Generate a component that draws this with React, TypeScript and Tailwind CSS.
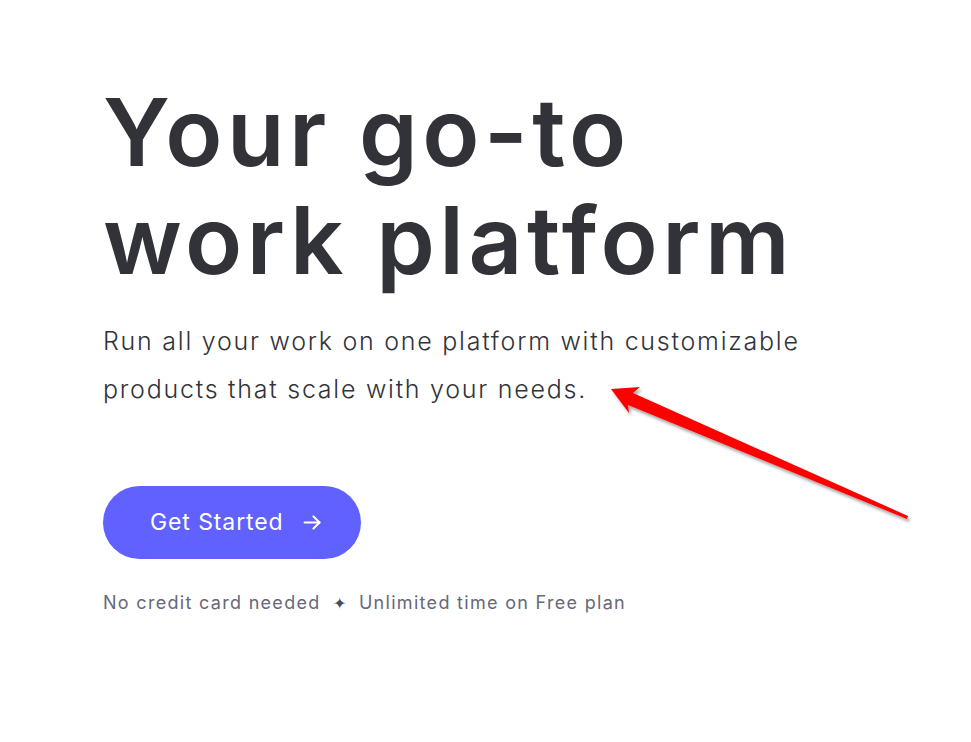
import React from "react";

export default function App() {
  return (
    <div className="relative w-[971px] h-[742px] bg-white overflow-hidden" style={{ fontFamily: "Inter, 'Noto Sans', sans-serif" }}>
      <div className="flex flex-col pl-[103px] pt-[78px]">
        <h1 className="text-[94px] leading-[108px] font-semibold text-[#323338] tracking-[4.5px]">
          Your go-to
          <br />
          work platform
        </h1>
        <p className="mt-[23px] text-[25px] leading-[48px] font-light text-[#323338] tracking-[1.75px]">
          Run all your work on one platform with customizable
          <br />
          products that scale with your needs.
        </p>
        <div className="mt-[73px] flex">
          <button className="flex items-center gap-[18px] h-[73px] w-[258px] rounded-full bg-[#6161ff] text-white text-[23px] tracking-[0.9px] pl-[47px]">
            <span>Get Started</span>
            <svg width="21" height="21" viewBox="0 0 24 24" fill="none" stroke="currentColor" strokeWidth="2.4" strokeLinecap="round" strokeLinejoin="round">
              <path d="M3 12h17" />
              <path d="M13 5l7 7-7 7" />
            </svg>
          </button>
        </div>
        <div className="mt-[30px] flex items-center text-[18px] text-[#676879] tracking-[1.3px]">
          <span>No credit card needed</span>
          <span className="mx-[12px] text-[16px] text-[#4b4c5e]">✦</span>
          <span>Unlimited time on Free plan</span>
        </div>
      </div>
      <svg className="absolute left-0 top-0 pointer-events-none" width="971" height="742" viewBox="0 0 971 742">
        <defs>
          <filter id="sh" x="-10%" y="-10%" width="120%" height="130%">
            <feDropShadow dx="2" dy="3" stdDeviation="1.5" floodColor="#000" floodOpacity="0.35" />
          </filter>
        </defs>
        <path
          d="M611 389 L640 387 L633 393 L908 516 L907 519 L628 405 L629 413 Z"
          fill="#ff0000"
          filter="url(#sh)"
        />
      </svg>
    </div>
  );
}
